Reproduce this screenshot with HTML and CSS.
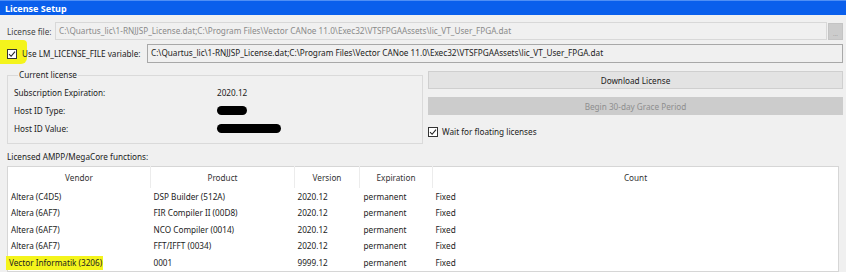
FILE: index.html
```html
<!DOCTYPE html>
<html lang="en">
<head>
    <meta charset="UTF-8">
    <title>License Setup</title>
    <link rel="stylesheet" href="styles.css">
</head>
<body>

    <div class="titlebar">License Setup</div>

    <div class="content">
        <!-- License file -->
        <div class="row file-row">
            <label class="file-label">License file:</label>
            <div class="input disabled">C:\Quartus_lic\1-RNJJSP_License.dat;C:\Program Files\Vector CANoe 11.0\Exec32\VTSFPGAAssets\lic_VT_User_FPGA.dat</div>
            <button class="browse-btn" disabled>...</button>
        </div>

        <!-- LM_LICENSE_FILE -->
        <div class="row env-row">
            <span class="checkbox"><svg width="8" height="8" viewBox="0 0 8 8"><path d="M1 4.2 L3.1 6.3 L7 1.6" fill="none" stroke="#222" stroke-width="1.1"/></svg></span>
            <label class="env-label">Use LM_LICENSE_FILE variable:</label>
            <div class="input">C:\Quartus_lic\1-RNJJSP_License.dat;C:\Program Files\Vector CANoe 11.0\Exec32\VTSFPGAAssets\lic_VT_User_FPGA.dat</div>
        </div>

        <div class="middle">
            <fieldset class="group">
                <legend>Current license</legend>
                <div class="info-row"><span class="info-key">Subscription Expiration:</span><span>2020.12</span></div>
                <div class="info-row"><span class="info-key">Host ID Type:</span><span class="blot short"></span></div>
                <div class="info-row"><span class="info-key">Host ID Value:</span><span class="blot long"></span></div>
            </fieldset>

            <div class="actions">
                <button class="btn">Download License</button>
                <button class="btn" disabled>Begin 30-day Grace Period</button>
                <div class="check-row">
                    <span class="checkbox"><svg width="8" height="8" viewBox="0 0 8 8"><path d="M1 4.2 L3.1 6.3 L7 1.6" fill="none" stroke="#222" stroke-width="1.1"/></svg></span>
                    <span>Wait for floating licenses</span>
                </div>
            </div>
        </div>

        <div class="table-title">Licensed AMPP/MegaCore functions:</div>

        <table class="grid">
            <colgroup>
                <col class="c-vendor">
                <col class="c-product">
                <col class="c-version">
                <col class="c-exp">
                <col>
            </colgroup>
            <thead>
                <tr><th>Vendor</th><th>Product</th><th>Version</th><th>Expiration</th><th>Count</th></tr>
            </thead>
            <tbody>
                <tr><td>Altera (C4D5)</td><td>DSP Builder (512A)</td><td>2020.12</td><td>permanent</td><td>Fixed</td></tr>
                <tr><td>Altera (6AF7)</td><td>FIR Compiler II (00D8)</td><td>2020.12</td><td>permanent</td><td>Fixed</td></tr>
                <tr><td>Altera (6AF7)</td><td>NCO Compiler (0014)</td><td>2020.12</td><td>permanent</td><td>Fixed</td></tr>
                <tr><td>Altera (6AF7)</td><td>FFT/IFFT (0034)</td><td>2020.12</td><td>permanent</td><td>Fixed</td></tr>
                <tr><td><span class="mark-text">Vector Informatik (3206)</span></td><td>0001</td><td>9999.12</td><td>permanent</td><td>Fixed</td></tr>
            </tbody>
        </table>
    </div>

</body>
</html>
```

FILE: styles.css
```css
body {
    margin: 0;
    width: 846px;
    height: 272px;
    overflow: hidden;
    background: #f0f0f0;
    font-family: "Noto Sans", "Open Sans", sans-serif;
    font-size: 8.2px;
    color: #222;
}
.titlebar {
    height: 15px;
    line-height: 15px;
    padding-left: 5px;
    background: #0a5fec;
    border-top: 1px solid #4f8ff5;
    box-sizing: border-box;
    color: white;
    font-weight: bold;
    font-size: 9px;
}
.content {
    padding: 0 3px 0 7px;
}
.row {
    display: flex;
    align-items: center;
}
.file-row {
    margin-top: 7px;
    height: 18px;
}
.file-label {
    width: 48px;
    color: #444;
}
.input {
    flex: 1;
    height: 100%;
    box-sizing: border-box;
    border: 1px solid #a8a8a8;
    background: #f0f0f0;
    padding-left: 3px;
    line-height: 16px;
    white-space: nowrap;
    overflow: hidden;
}
.input.disabled {
    border-color: #d8d8d8;
    color: #8a8a8a;
}
.browse-btn {
    width: 15px;
    height: 17px;
    margin-left: 1px;
    padding: 0;
    border: 1px solid #c4c4c4;
    background: #cccccc;
    color: #999;
    font-size: 6px;
    font-family: inherit;
    line-height: 20px;
}
.env-row {
    position: relative;
    margin-top: 4px;
    height: 19px;
}
/* highlighter mark behind the checkbox */
.env-row::before {
    content: "";
    position: absolute;
    left: -7px;
    top: -4px;
    width: 27px;
    height: 24px;
    background: #f4f41c;
    border-radius: 0 4px 6px 0;
    z-index: -1;
}
.checkbox {
    display: inline-flex;
    align-items: center;
    justify-content: center;
    width: 10px;
    height: 10px;
    box-sizing: border-box;
    border: 1px solid #333;
    background: #fff;
}
.env-label {
    width: 125px;
    margin-left: 5px;
}
.middle {
    display: flex;
    margin-top: 8px;
    height: 72px;
}
.group {
    width: 416px;
    box-sizing: border-box;
    margin: 0;
    padding: 4px 0 0 6px;
    height: 73px;
    border: 1px solid #dadada;
}
.group legend {
    padding: 0 1px;
    margin-left: 4px;
    font-size: 8.2px;
    line-height: 8px;
}
.info-row {
    display: flex;
    align-items: center;
    height: 18px;
}
.info-key {
    width: 203px;
}
.blot {
    display: inline-block;
    height: 9px;
    background: #000;
    border-radius: 5px;
}
.blot.short {
    width: 30px;
}
.blot.long {
    width: 64px;
}
.actions {
    flex: 1;
    margin-left: 5px;
    display: flex;
    flex-direction: column;
}
.btn {
    height: 18px;
    margin-bottom: 8px;
    padding: 0;
    border: 1px solid #cfcfcf;
    background: #e3e3e3;
    color: #222;
    font-family: inherit;
    font-size: 8.2px;
}
.btn:disabled {
    background: #cccccc;
    border-color: #cccccc;
    color: #8e8e8e;
}
.check-row {
    display: flex;
    align-items: center;
    gap: 4px;
    margin-top: 3px;
}
.table-title {
    margin-top: 8px;
    height: 15px;
    line-height: 12px;
}
.grid {
    width: 832px;
    border-collapse: collapse;
    table-layout: fixed;
    background: #fff;
    border: 1px solid #d6d6d6;
}
.c-vendor { width: 143px; }
.c-product { width: 144px; }
.c-version { width: 65px; }
.c-exp { width: 73px; }
.grid th {
    height: 21px;
    padding: 0;
    font-weight: normal;
    color: #333;
    border-left: 1px solid #ececec;
}
.grid th:first-child {
    border-left: none;
}
.grid td {
    height: 16.5px;
    padding: 0 0 0 3px;
    white-space: nowrap;
}
.grid td:nth-child(4) {
    padding-left: 4px;
}
.mark-text {
    background: #f4f41c;
    padding: 1px 1px 2px 3px;
    margin-left: -5px;
}
```
